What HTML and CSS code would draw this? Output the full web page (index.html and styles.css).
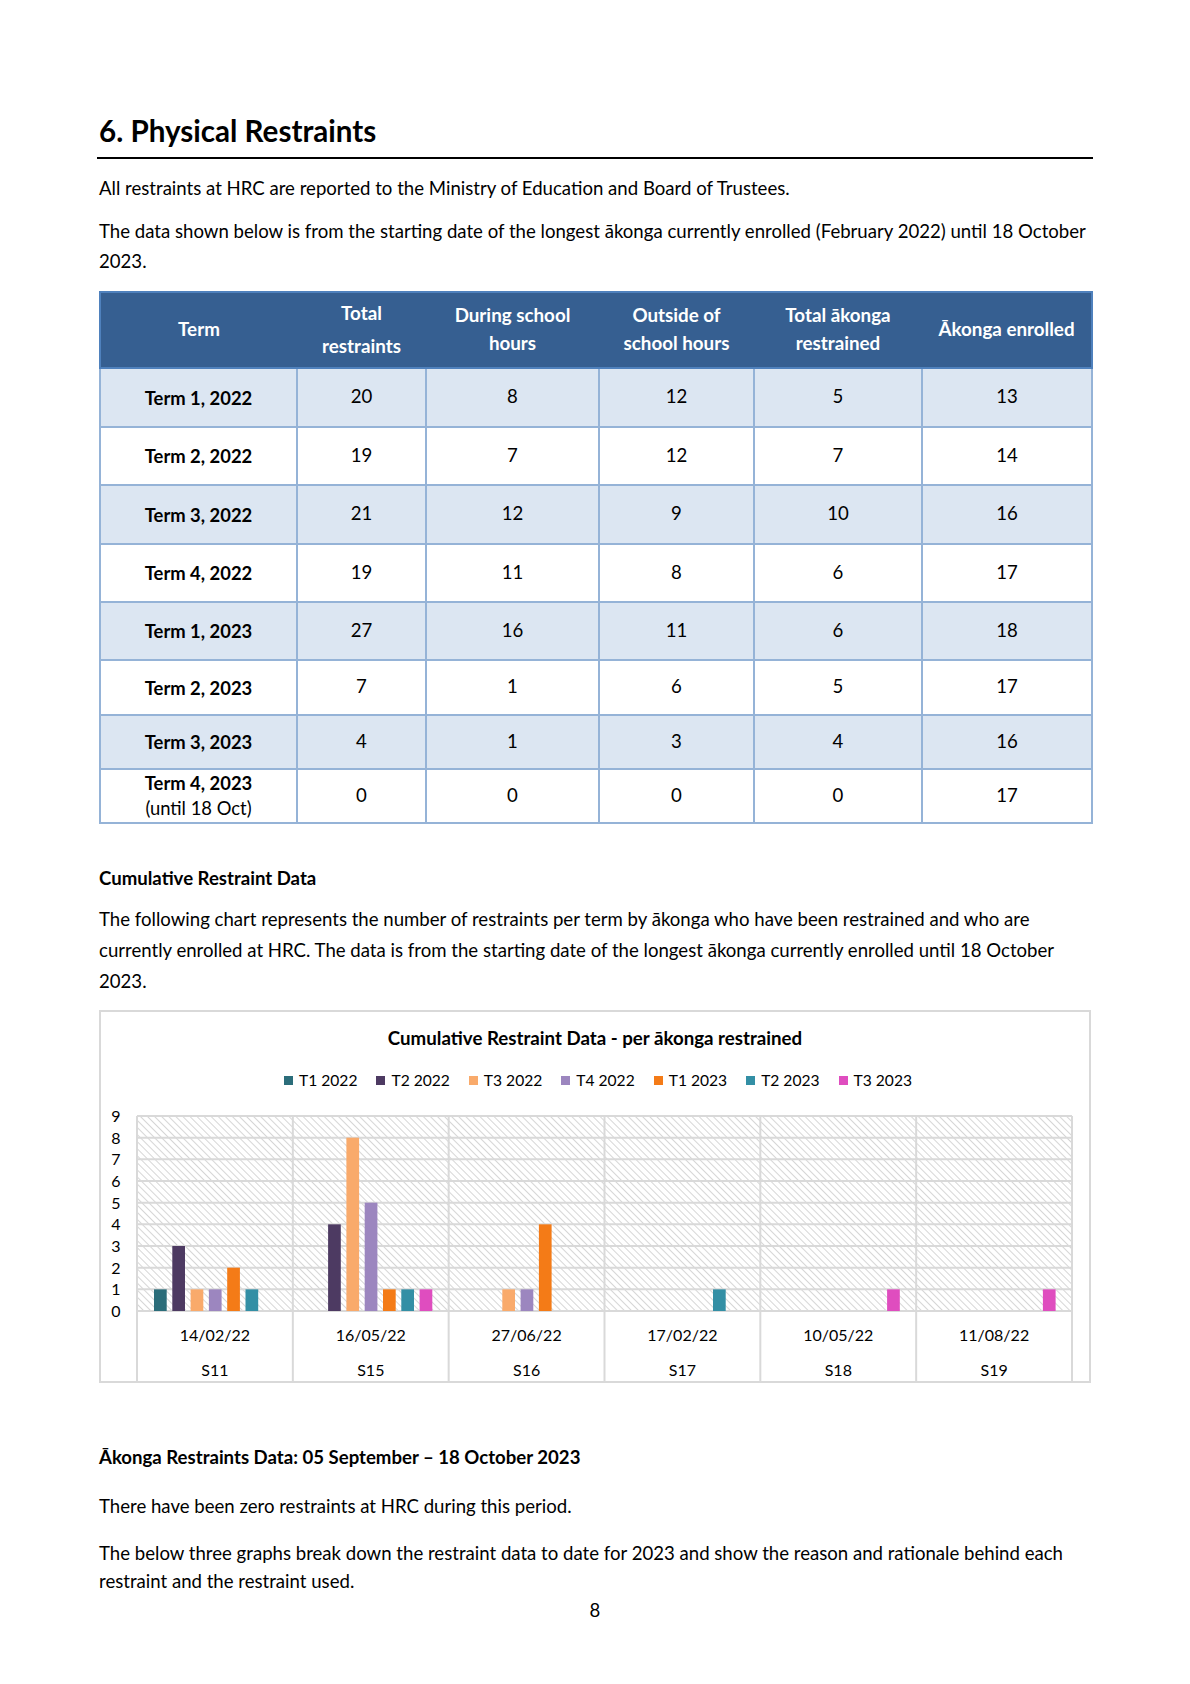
FILE: index.html
```html
<!DOCTYPE html>
<html lang="en">
<head>
<meta charset="utf-8">
<title>6. Physical Restraints</title>
<link rel="stylesheet" href="styles.css">
</head>
<body>
<main class="page">
  <h1 class="title">6. Physical Restraints</h1>
  <p class="text p-intro">All restraints at HRC are reported to the Ministry of Education and Board of Trustees.</p>
  <p class="text p-range">The data shown below is from the starting date of the longest ākonga currently enrolled (February 2022) until 18 October<br>2023.</p>

  <table class="data">
    <colgroup>
      <col class="c-term"><col class="c-total"><col class="c-during"><col class="c-outside"><col class="c-akonga"><col class="c-enrolled">
    </colgroup>
    <thead>
      <tr>
        <th>Term</th>
        <th class="th-tall">Total<br>restraints</th>
        <th>During school<br>hours</th>
        <th>Outside of<br>school hours</th>
        <th>Total ākonga<br>restrained</th>
        <th>Ākonga enrolled</th>
      </tr>
    </thead>
    <tbody>
      <tr class="alt r-a"><td class="term">Term 1, 2022</td><td>20</td><td>8</td><td>12</td><td>5</td><td>13</td></tr>
      <tr class="r-b"><td class="term">Term 2, 2022</td><td>19</td><td>7</td><td>12</td><td>7</td><td>14</td></tr>
      <tr class="alt r-a"><td class="term">Term 3, 2022</td><td>21</td><td>12</td><td>9</td><td>10</td><td>16</td></tr>
      <tr class="r-b"><td class="term">Term 4, 2022</td><td>19</td><td>11</td><td>8</td><td>6</td><td>17</td></tr>
      <tr class="alt r-b"><td class="term">Term 1, 2023</td><td>27</td><td>16</td><td>11</td><td>6</td><td>18</td></tr>
      <tr class="r-c"><td class="term">Term 2, 2023</td><td>7</td><td>1</td><td>6</td><td>5</td><td>17</td></tr>
      <tr class="alt r-d"><td class="term">Term 3, 2023</td><td>4</td><td>1</td><td>3</td><td>4</td><td>16</td></tr>
      <tr class="r-d"><td class="term term-two">Term 4, 2023<span class="until">(until 18 Oct)</span></td><td>0</td><td>0</td><td>0</td><td>0</td><td>17</td></tr>
    </tbody>
  </table>

  <h2 class="subhead sub-cum">Cumulative Restraint Data</h2>
  <p class="text p-chart">The following chart represents the number of restraints per term by ākonga who have been restrained and who are<br>currently enrolled at HRC. The data is from the starting date of the longest ākonga currently enrolled until 18 October<br>2023.</p>

  <section class="chart">
    <h3 class="chart-title">Cumulative Restraint Data - per ākonga restrained</h3>
    <ul class="legend">
      <li><span class="swatch sw1"></span>T1 2022</li>
      <li><span class="swatch sw2"></span>T2 2022</li>
      <li><span class="swatch sw3"></span>T3 2022</li>
      <li><span class="swatch sw4"></span>T4 2022</li>
      <li><span class="swatch sw5"></span>T1 2023</li>
      <li><span class="swatch sw6"></span>T2 2023</li>
      <li><span class="swatch sw7"></span>T3 2023</li>
    </ul>
    <svg class="plot" width="988" height="282" viewBox="0 0 988 282" xmlns="http://www.w3.org/2000/svg">
      <defs>
        <pattern id="hatch" width="5" height="5" patternUnits="userSpaceOnUse" patternTransform="rotate(-45)">
          <rect width="5" height="5" fill="#ffffff"/>
          <line x1="0" y1="0" x2="0" y2="5" stroke="#cfcfcf" stroke-width="1.7"/>
        </pattern>
      </defs>
      <rect x="36" y="17" width="935" height="195" fill="url(#hatch)"/>
      <g stroke="#d9d9d9" stroke-width="2">
        <line x1="36" y1="17" x2="971" y2="17"/>
        <line x1="36" y1="38.67" x2="971" y2="38.67"/>
        <line x1="36" y1="60.33" x2="971" y2="60.33"/>
        <line x1="36" y1="82" x2="971" y2="82"/>
        <line x1="36" y1="103.67" x2="971" y2="103.67"/>
        <line x1="36" y1="125.33" x2="971" y2="125.33"/>
        <line x1="36" y1="147" x2="971" y2="147"/>
        <line x1="36" y1="168.67" x2="971" y2="168.67"/>
        <line x1="36" y1="190.33" x2="971" y2="190.33"/>
        <line x1="36" y1="212" x2="971" y2="212"/>
        <line x1="36" y1="17" x2="36" y2="282"/>
        <line x1="191.83" y1="17" x2="191.83" y2="282"/>
        <line x1="347.67" y1="17" x2="347.67" y2="282"/>
        <line x1="503.5" y1="17" x2="503.5" y2="282"/>
        <line x1="659.33" y1="17" x2="659.33" y2="282"/>
        <line x1="815.17" y1="17" x2="815.17" y2="282"/>
        <line x1="971" y1="17" x2="971" y2="282"/>
      </g>
      <g class="bars">
        <rect x="53" y="190.33" width="12.7" height="21.67" fill="#2b6d7a"/>
        <rect x="71.3" y="147" width="12.7" height="65" fill="#4d3a62"/>
        <rect x="89.6" y="190.33" width="12.7" height="21.67" fill="#f9aa6b"/>
        <rect x="107.9" y="190.33" width="12.7" height="21.67" fill="#9c86bf"/>
        <rect x="126.2" y="168.67" width="12.7" height="43.33" fill="#f47b17"/>
        <rect x="144.5" y="190.33" width="12.7" height="21.67" fill="#338fa5"/>

        <rect x="227.1" y="125.33" width="12.7" height="86.67" fill="#4d3a62"/>
        <rect x="245.4" y="38.67" width="12.7" height="173.33" fill="#f9aa6b"/>
        <rect x="263.7" y="103.67" width="12.7" height="108.33" fill="#9c86bf"/>
        <rect x="282" y="190.33" width="12.7" height="21.67" fill="#f47b17"/>
        <rect x="300.3" y="190.33" width="12.7" height="21.67" fill="#338fa5"/>
        <rect x="318.6" y="190.33" width="12.7" height="21.67" fill="#df4dbf"/>

        <rect x="401.3" y="190.33" width="12.7" height="21.67" fill="#f9aa6b"/>
        <rect x="419.6" y="190.33" width="12.7" height="21.67" fill="#9c86bf"/>
        <rect x="437.9" y="125.33" width="12.7" height="86.67" fill="#f47b17"/>

        <rect x="612" y="190.33" width="12.7" height="21.67" fill="#338fa5"/>
        <rect x="786.1" y="190.33" width="12.7" height="21.67" fill="#df4dbf"/>
        <rect x="941.9" y="190.33" width="12.7" height="21.67" fill="#df4dbf"/>
      </g>
      <g class="axis-y" text-anchor="middle">
        <text x="15" y="23">9</text>
        <text x="15" y="44.67">8</text>
        <text x="15" y="66.33">7</text>
        <text x="15" y="88">6</text>
        <text x="15" y="109.67">5</text>
        <text x="15" y="131.33">4</text>
        <text x="15" y="153">3</text>
        <text x="15" y="174.67">2</text>
        <text x="15" y="196.33">1</text>
        <text x="15" y="218">0</text>
      </g>
      <g class="axis-x" text-anchor="middle">
        <text x="113.9" y="242">14/02/22</text>
        <text x="269.8" y="242">16/05/22</text>
        <text x="425.6" y="242">27/06/22</text>
        <text x="581.4" y="242">17/02/22</text>
        <text x="737.3" y="242">10/05/22</text>
        <text x="893.1" y="242">11/08/22</text>
        <text x="113.9" y="277">S11</text>
        <text x="269.8" y="277">S15</text>
        <text x="425.6" y="277">S16</text>
        <text x="581.4" y="277">S17</text>
        <text x="737.3" y="277">S18</text>
        <text x="893.1" y="277">S19</text>
      </g>
    </svg>
  </section>

  <h2 class="subhead sub-akonga">Ākonga Restraints Data: 05 September – 18 October 2023</h2>
  <p class="text p-zero">There have been zero restraints at HRC during this period.</p>
  <p class="text p-below">The below three graphs break down the restraint data to date for 2023 and show the reason and rationale behind each<br>restraint and the restraint used.</p>
  <div class="page-num">8</div>
</main>
</body>
</html>
```

FILE: styles.css
```css
* {
  box-sizing: border-box;
}

html, body {
  margin: 0;
  padding: 0;
  background: #ffffff;
}

body {
  font-family: Lato, "Open Sans", "DejaVu Sans", sans-serif;
  color: #000000;
}

.page {
  display: block;
  width: 1190px;
  height: 1684px;
  padding: 113px 97px 0 97px;
  overflow: hidden;
}

.title {
  margin: 0;
  padding: 0 0 8px 2px;
  font-size: 29.6px;
  line-height: 36px;
  font-weight: 700;
  border-bottom: 2px solid #000000;
}

.text {
  margin: 0 2px;
  font-size: 18.6px;
  line-height: 30px;
  font-weight: 400;
  white-space: nowrap;
}

.p-intro {
  margin-top: 14px;
}

.p-range {
  margin-top: 13px;
}

/* Table */
.data {
  margin: 15px 2px 0 2px;
  width: 992px;
  border-collapse: collapse;
  table-layout: fixed;
  font-size: 18.6px;
}

.c-term { width: 197px; }
.c-total { width: 129px; }
.c-during { width: 173px; }
.c-outside { width: 155px; }
.c-akonga { width: 168px; }
.c-enrolled { width: 170px; }

.data th {
  height: 76px;
  padding: 0 0 3px 0;
  background: #365f91;
  color: #ffffff;
  font-weight: 700;
  font-size: 18.8px;
  line-height: 28px;
  text-align: center;
  vertical-align: middle;
  border-top: 2px solid #4f81bd;
  border-bottom: 2px solid #4f81bd;
}

.data th:first-child {
  border-left: 2px solid #4f81bd;
}

.data th:last-child {
  border-right: 2px solid #4f81bd;
}

.data th.th-tall {
  line-height: 33px;
}

.data td {
  padding: 0 0 3px 0;
  border: 2px solid #95b3d7;
  text-align: center;
  vertical-align: middle;
  line-height: 26px;
}

.data tr.alt td {
  background: #dce6f2;
}

.data tr.r-a td { height: 59px; }
.data tr.r-b td { height: 58px; }
.data tr.r-c td { height: 55px; }
.data tr.r-d td { height: 54px; }

.data td.term {
  font-weight: 700;
  font-size: 18.4px;
  padding-bottom: 0;
}

.data td.term-two {
  line-height: 25px;
}

.until {
  display: block;
  font-weight: 400;
}

/* Sub headings */
.subhead {
  margin: 0 2px;
  font-size: 18.6px;
  line-height: 30px;
  font-weight: 700;
}

.sub-cum {
  margin-top: 39px;
}

.p-chart {
  margin-top: 11px;
  line-height: 31px;
}

/* Chart */
.chart {
  margin: 13px 2px 0 2px;
  width: 992px;
  height: 373px;
  border: 2px solid #d9d9d9;
  display: flex;
  flex-direction: column;
  align-items: stretch;
}

.chart-title {
  margin: 14px 0 0 0;
  font-size: 18.7px;
  line-height: 24px;
  font-weight: 700;
  text-align: center;
}

.legend {
  list-style: none;
  margin: 20px 0 0 0;
  padding: 0 0 0 6px;
  display: flex;
  justify-content: center;
  gap: 19px;
  font-size: 15.6px;
  line-height: 20px;
}

.legend li {
  display: flex;
  align-items: center;
  gap: 6px;
}

.swatch {
  display: inline-block;
  width: 9px;
  height: 9px;
}

.sw1 { background: #2b6d7a; }
.sw2 { background: #4d3a62; }
.sw3 { background: #f9aa6b; }
.sw4 { background: #9c86bf; }
.sw5 { background: #f47b17; }
.sw6 { background: #338fa5; }
.sw7 { background: #df4dbf; }

.plot {
  display: block;
  margin-top: 9px;
  font-family: Lato, "Open Sans", sans-serif;
}

.axis-y text {
  font-size: 16px;
  fill: #000000;
}

.axis-x text {
  font-size: 16px;
  fill: #000000;
}

.sub-akonga {
  margin-top: 59px;
}

.p-zero {
  margin-top: 19px;
}

.p-below {
  margin-top: 18px;
  line-height: 28px;
}

.page-num {
  margin-top: 1px;
  text-align: center;
  font-size: 18.6px;
  line-height: 28px;
}
```
